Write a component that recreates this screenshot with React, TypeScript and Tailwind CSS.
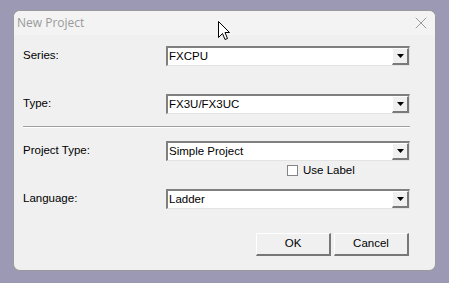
import { X } from 'lucide-react'

const rows = [
  { label: 'Series:', value: 'FXCPU' },
  { label: 'Type:', value: 'FX3U/FX3UC' },
]

function Combo({ value }: { value: string }) {
  return (
    <div className="flex h-[20px] w-[244px] border-t-2 border-l-2 border-t-[#808080] border-l-[#808080] border-b border-r border-b-[#e3e3e3] border-r-[#e3e3e3] bg-white">
      <div className="flex-1 pl-[1px] text-[11.5px] leading-[17px] text-[#000]">{value}</div>
      <div className="flex w-[17px] items-center justify-center border-t border-l border-t-white border-l-white border-b-2 border-r-2 border-b-[#7a7a7a] border-r-[#7a7a7a] bg-[#f0f0f0]">
        <svg width="7" height="4" viewBox="0 0 7 4">
          <path d="M0 0h7L3.5 4z" fill="#000" />
        </svg>
      </div>
    </div>
  )
}

function Button({ children }: { children: string }) {
  return (
    <button className="h-[23px] w-[75px] border-t border-l border-t-white border-l-white border-b-2 border-r-2 border-b-[#777] border-r-[#777] bg-[#f0f0f0] text-[11.5px] text-[#000]">
      {children}
    </button>
  )
}

export default function App() {
  return (
    <div className="relative h-[283px] w-[449px] bg-[#9b99b3] pl-[13px] pt-[10px]" style={{ fontFamily: 'Tahoma, "Liberation Sans", Arial, sans-serif' }}>
      <div className="flex h-[261px] w-[423px] flex-col overflow-hidden rounded-[7px] border border-[#9a9a9a] bg-[#f0f0f0]">
        <div className="flex h-[24px] items-center justify-between bg-[#f3f3f3] pl-[3px] pr-[4px]">
          <span className="text-[12px] text-[#9a9a9a]" style={{ fontFamily: '"Open Sans", sans-serif' }}>New Project</span>
          <X className="h-[20px] w-[20px] text-[#8a8a8a]" strokeWidth={1} />
        </div>

        <div className="flex flex-col px-[9px] pt-[11px] text-[11.5px]">
          {rows.map((r, i) => (
            <div key={r.label} className={`flex items-center ${i > 0 ? 'mt-[28px]' : ''}`}>
              <span className="w-[143px] text-[#000]">{r.label}</span>
              <Combo value={r.value} />
            </div>
          ))}

          <div className="mt-[12px] h-[2px] w-[387px] border-t border-b border-t-[#a0a0a0] border-b-white" />

          <div className="mt-[13px] flex items-center">
            <span className="w-[143px] text-[#000]">Project Type:</span>
            <Combo value="Simple Project" />
          </div>

          <div className="mt-[4px] flex h-[11px] items-center pl-[264px]">
            <div className="h-[11px] w-[11px] border border-[#858585] bg-white" />
            <span className="ml-[5px] text-[#000]">Use Label</span>
          </div>

          <div className="mt-[13px] flex items-center">
            <span className="w-[143px] text-[#000]">Language:</span>
            <Combo value="Ladder" />
          </div>

          <div className="mt-[24px] flex justify-end gap-[3px] pr-[17px]">
            <Button>OK</Button>
            <Button>Cancel</Button>
          </div>
        </div>
      </div>

      <svg className="absolute left-[218px] top-[21px]" width="12" height="19" viewBox="0 0 12 19">
        <path d="M0.5 0.5V16.5L4.5 12.5L7 18.5L9.5 17.5L7 11.5H11.5Z" fill="#fff" stroke="#000" strokeWidth="1" strokeLinejoin="round" />
      </svg>
    </div>
  )
}
